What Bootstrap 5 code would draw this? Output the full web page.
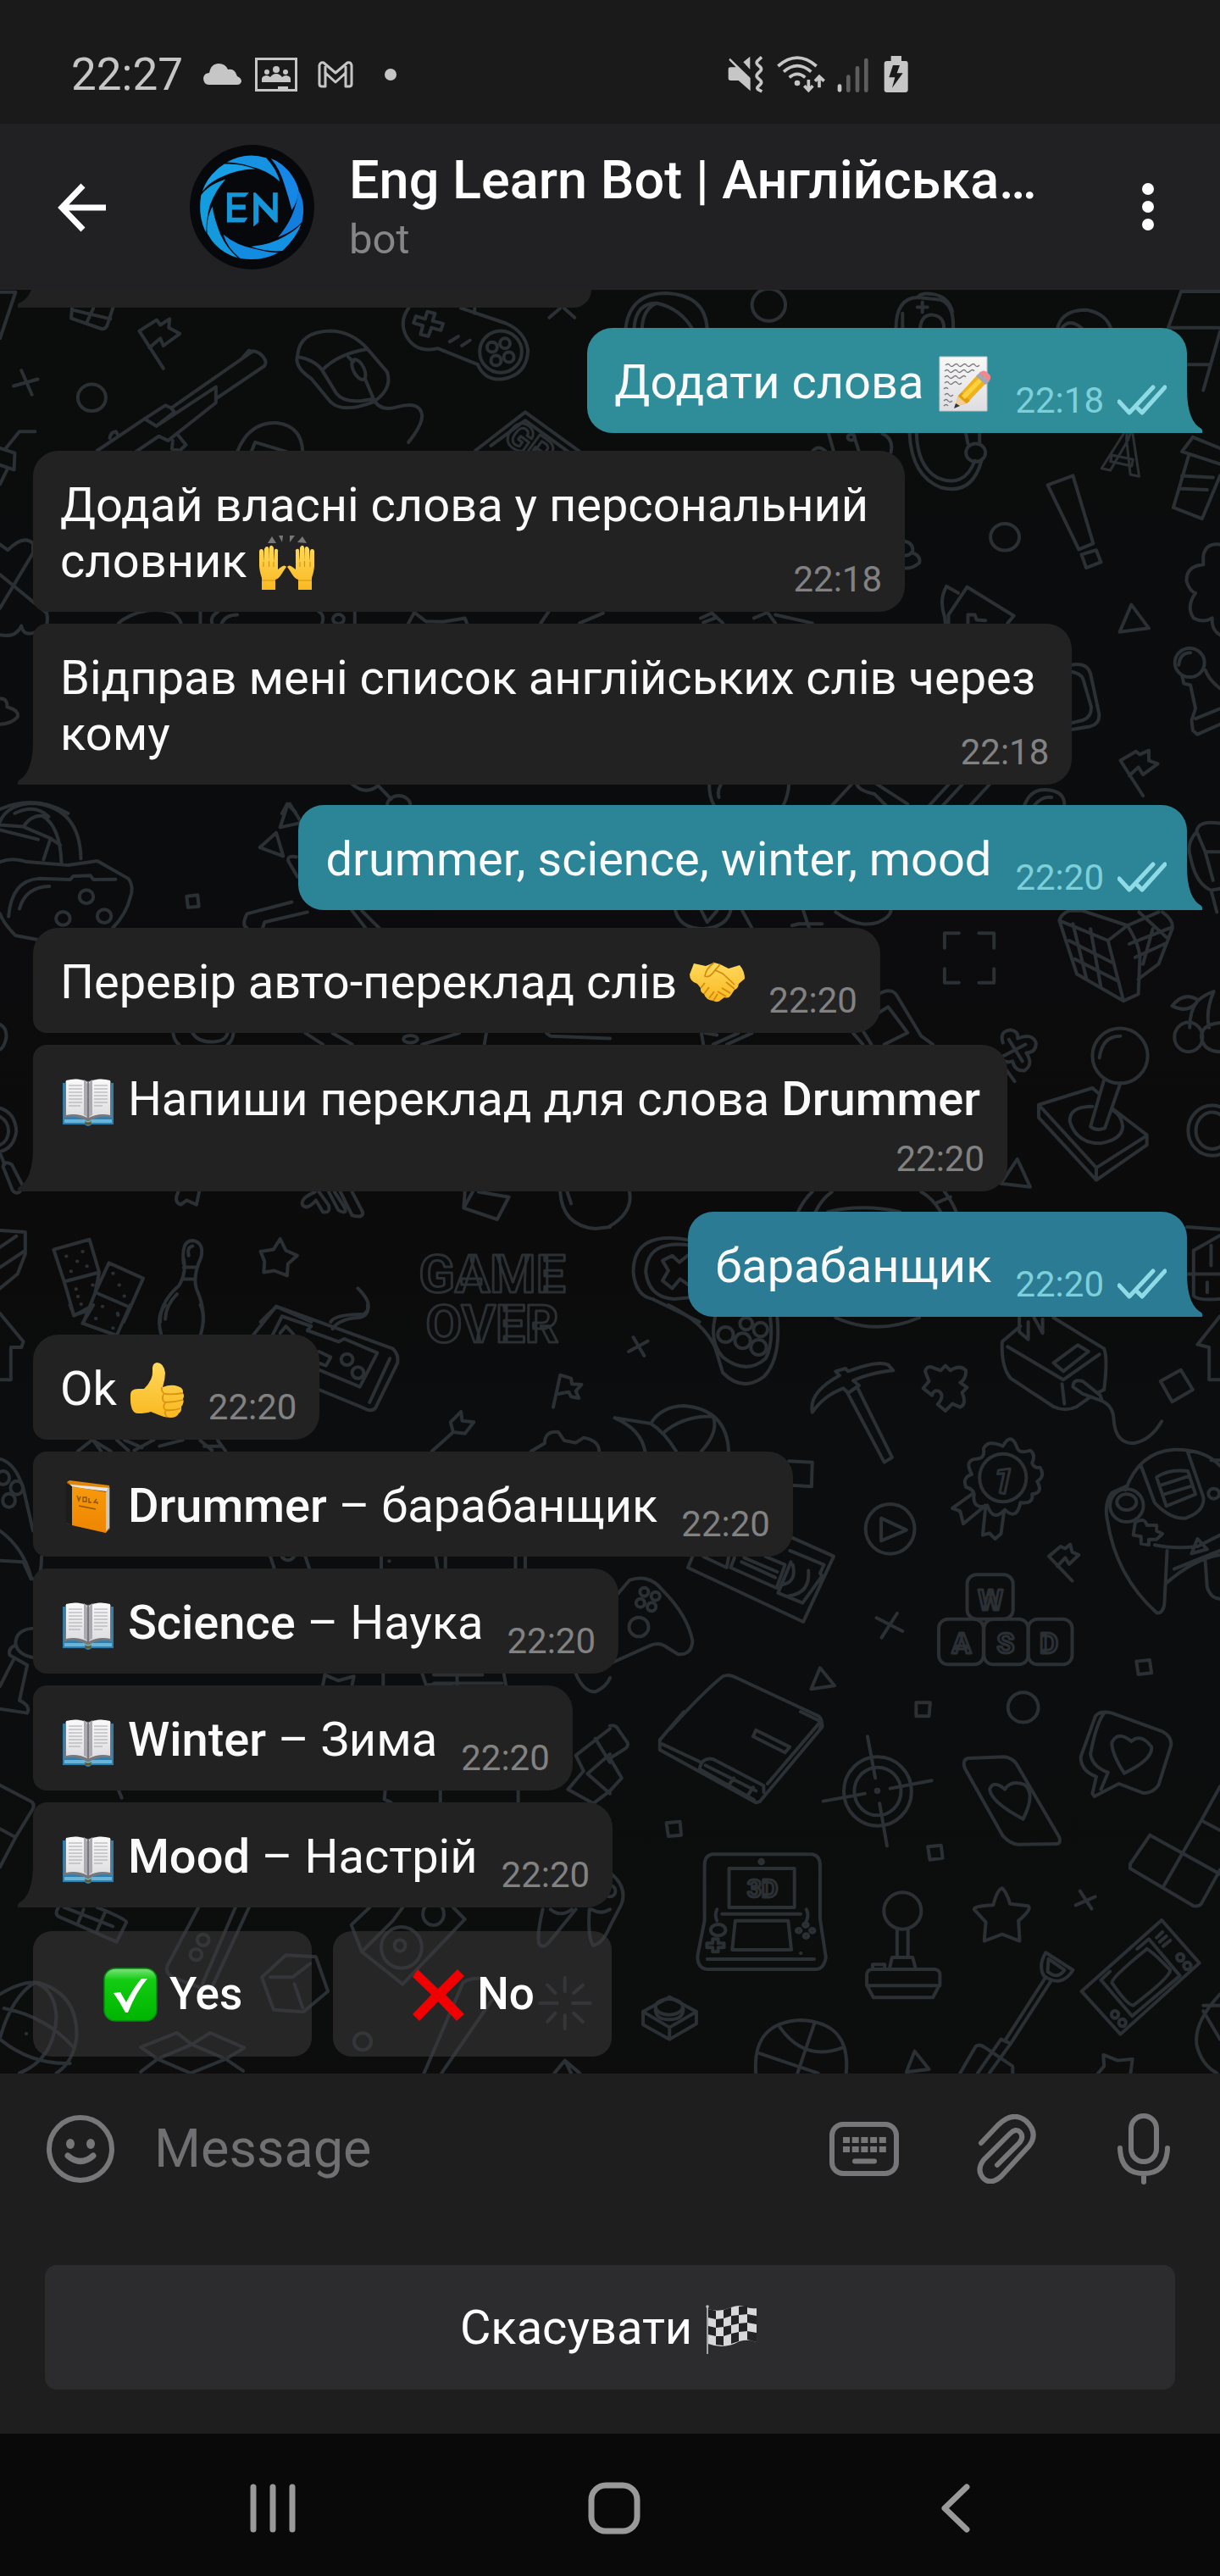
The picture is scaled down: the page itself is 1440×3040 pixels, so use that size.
<!DOCTYPE html>
<html lang="uk">
<head>
<meta charset="utf-8">
<meta name="viewport" content="width=device-width, initial-scale=1">
<title>Eng Learn Bot</title>
<link rel="stylesheet" href="https://cdn.jsdelivr.net/npm/bootstrap@5.3.0/dist/css/bootstrap.min.css">
<style>
body{background:#1e1e1e;color:#fafafa;font-family:Roboto,"Noto Sans",sans-serif}
svg{display:block;flex-shrink:0}
.statusbar{background:#1a1a1a;color:#c6c6c6;height:146px;padding:30px 0 0 84px;font-size:53px;line-height:60px}
.statusright{margin-right:367px}
.chathead{background:#212123;height:196px;padding:0 62px 0 62px}
.iconbtn{background:none;border:0;padding:0;color:inherit}
.chathead h1{font-size:63px;line-height:74px;font-weight:500;color:#fff}
.chathead .sub{font-size:49px;line-height:58px;color:#868688}
.avatar{margin:0 41px 0 91px}
.chat{background:linear-gradient(#0b0d0c,#0b0c0e 30%,#0b0b0b 55%,#0b0d0e 62%,#0b0d0e 80%,#0d0d0d);padding:0 39px 20px;overflow:hidden}
.wallpaper{position:absolute;inset:0;width:100%;height:100%}
.wallpaper g,.wallpaper .outl{fill:none;stroke:#2b3035;stroke-width:4;stroke-linecap:round;stroke-linejoin:round}
.wallpaper path,.wallpaper ellipse,.wallpaper rect{vector-effect:non-scaling-stroke}
.wallpaper .outl{font-family:Roboto,sans-serif;font-weight:700;stroke-width:3;text-anchor:middle}
.msg{position:relative;display:flex;align-items:flex-end;gap:28px;background:#222;padding:31px 27px 27px 32px;margin-top:14px;border-radius:16px 30px 30px 16px;font-size:56px;line-height:66px;white-space:nowrap}
.msg b{font-weight:500}
.msg.first{border-top-left-radius:30px;margin-top:21px}
.msg.tail{border-bottom-left-radius:0}
.msg.tail::after,.msg.sent::after{content:"";position:absolute;bottom:0;left:-19px;width:21px;height:52px;background:inherit;clip-path:path("M21 0V52H1Q0 49 2 47Q19 38 19 0Z")}
.msg.sent{background:#2f8d9a;border-radius:30px 30px 0 30px;margin:24px 0 0;padding-right:24px}
.msg.sent::after{left:auto;right:-19px;transform:scaleX(-1)}
.msg.sent.mid{background:#2c8597}
.msg.sent.low{background:#2a7b93}
.msg.multi{padding-right:43px}
.msg.loose{padding:31px 32px 76px}
.stamp{display:flex;align-items:center;gap:16px;font-size:42px;line-height:48px;color:#828282;margin-bottom:-13px}
.sent .stamp{color:#7dd0da}
.multi .stamp,.loose .stamp{position:absolute;right:27px;bottom:14px;margin:0}
.stub{margin:0 0 0;width:659px;height:21px;padding:0}
.stub.msg.tail{border-top-left-radius:0;border-top-right-radius:0}
.stub.msg.tail::after{height:21px;clip-path:path("M21 0V21H1Q0 18 2 16Q12 12 17 0Z")}
.emo{display:inline-block;width:66px;height:66px;margin:-4px 0;vertical-align:-12px}
.quick{margin-top:28px;gap:25px}
.quick button{flex:0 0 329px;height:148px;border:0;border-radius:22px;background:rgba(60,60,60,.55);color:#fff;font-weight:500;font-size:53px;line-height:62px;padding:0}
.compose{height:177px;padding:0 58px 0 54px;color:#77777a}
.compose input{background:none;border:0;outline:0;font-size:63px;line-height:74px;color:#fff;min-width:0;margin-left:46px;padding:0}
.compose input::placeholder{color:#707072;opacity:1}
.compose .attach{margin-left:92px}
.compose .voice{margin-left:95px}
.kbd{padding:49px 53px 52px}
.kbd button{height:147px;border:0;border-radius:14px;background:#2c2c2e;color:#fff;font-size:56px;line-height:66px;padding:0}
.softnav{background:#090909;color:#999;height:168px;padding:8px 110px 0 120px}
.softnav button{flex:1}
</style>
</head>
<body>
<svg width="0" height="0" class="position-absolute" aria-hidden="true">
<defs>
<linearGradient id="skin" x1="0" y1="0" x2="0" y2="1"><stop offset="0" stop-color="#ffd95c"/><stop offset="1" stop-color="#f9b820"/></linearGradient>
<linearGradient id="paper" x1="0" y1="0" x2="0" y2="1"><stop offset="0" stop-color="#f8f8f8"/><stop offset="1" stop-color="#dedee2"/></linearGradient>
<linearGradient id="greenbox" x1="0" y1="0" x2="0" y2="1"><stop offset="0" stop-color="#7ee27e"/><stop offset=".22" stop-color="#12cc12"/><stop offset="1" stop-color="#00b400"/></linearGradient>
<linearGradient id="cover" x1="0" y1="0" x2="0" y2="1"><stop offset="0" stop-color="#f79a0c"/><stop offset="1" stop-color="#ee8500"/></linearGradient>
<symbol id="book" viewBox="0 0 66 66">
<path d="M3 12h60v49H37q-4 4-8 0H3z" fill="#2f7fae"/><path d="M5 55h56v4H5z" fill="#6ab4d8"/>
<path d="M6 10Q20 5 33 10Q46 5 60 10L61 53Q46 50 34 57H32Q20 50 5 53Z" fill="#77777c"/>
<path d="M7 9Q21 5 32 11V53Q20 47 7 50Z" fill="url(#paper)"/><path d="M59 9Q45 5 34 11V53Q46 47 59 50Z" fill="url(#paper)"/>
<path d="M28 8q3 2 4 5v40q-2-3-4-3zM38 8q-3 2-4 5v40q2-3 4-3z" fill="#aaaab0"/>
<path d="M10 15h16M10 19h16M10 23h16M10 27h16M10 31h16M10 35h16M10 39h14M40 15h16M40 19h16M40 23h16M40 27h16M40 31h16M40 35h16M40 39h10" stroke="#a8a8ad" stroke-width="1.2" fill="none"/>
<path d="M29 57q4 3 8 0l-1 4h-6z" fill="#5c5a2a"/>
</symbol>
<symbol id="orange" viewBox="0 0 66 66">
<path d="M8 3L59 9V58L54 63L8 52Z" fill="#8a5300"/><path d="M10 3L58 8L55 14L14 9Z" fill="#e6e6e6"/><path d="M54 15L58 9V57L54 62Z" fill="#c9c6c0"/>
<path d="M8 3L11 1L58 7V10L13 6Z" fill="#e0860a"/>
<path d="M7 4L14 8V54L7 51Z" fill="#1c1c1a"/><path d="M14 8L54 15V63L14 54Z" fill="url(#cover)"/>
<path d="M20 19l2 6 2-5M27 21h4v5h-4zM34 22v5h3M43 23l-3 4h4v2M22 31l20 4" stroke="#8d5600" stroke-width="1.4" fill="none"/>
</symbol>
<symbol id="note" viewBox="0 0 66 66">
<path d="M5 1H61V65H5Z" fill="url(#paper)" stroke="#c5c5c8"/>
<path d="M12 11q3-3 5 0t5 0 5 0 5 0 5 0 5 0 5 0 5 0M11 18q3-3 5 0t5 0 5 0 5 0 5 0 5 0 5 0M11 25q3-3 5 0t5 0 5 0 5 0 5 0M11 32q3-3 5 0t5 0 5 0 5 0M10 39q3-3 5 0M11 46q3-3 5 0t5 0M10 53q3-3 5 0t5 0M10 59q3-3 5 0" fill="none" stroke="#77777c" stroke-width="1.300"/>
<path d="M23 60L27 47L50 22L60 32L37 56Z" fill="#efb21e"/><path d="M27 47L31 43L41 53L37 56Z" fill="#e09c10"/><path d="M31 47L53 25L57 28L35 51Z" fill="#ffd23d"/>
<path d="M23 60L27 48L36 56Z" fill="#efcd9c"/><path d="M22 62L24 56L29 59Z" fill="#333"/>
<path d="M48 24L53 19L64 30L59 34Z" fill="#a4a7ad"/><path d="M52 20Q57 15 62 20Q68 25 63 30Z" fill="#ee8892"/>
</symbol>
<symbol id="hands" viewBox="0 0 66 66">
<path d="M11 10l5-8 5 8zM24 1l5 0-1 8zM37 9l0-8 6 0zM46 9l6-7 5 8z" fill="#777"/>
<g id="hand1"><path d="M4 65V51Q1 42 1 36V20Q1 17 3.500 17T6 20V32L7 17Q8 14 10 14T12.500 17V31L13 15Q14 12 16 13T18 16V32L19 18Q20 16 22 17T23 20V41L27 38Q31 35 33 38Q30 42 27 47Q24 52 20 53V65Z" fill="url(#skin)"/><path d="M6 32v6M12.500 31v7M18 32v6M4 54h16" stroke="#dc9410" stroke-width="1.200" fill="none"/></g>
<use href="#hand1" transform="matrix(-1 0 0 1 67 0)"/>
</symbol>
<symbol id="shake" viewBox="0 0 66 66">
<path d="M6 9L20 12L30 8L37 10L47 15L60 11Q66 18 66 27L59 33Q58 39 54 40L50 46Q47 51 42 49L38 52Q34 56 29 53Q20 52 18 45Q13 43 14 38L10 33Q1 30 1 22Z" fill="url(#skin)"/>
<path d="M30 8Q20 15 19 24Q24 27 31 17Q36 19 40 21L54 34M37 10L31 17M39 38l10 6M34 42l10 6M44 31l10 8M14 38l5-6M18 45l6-8M24 50l6-8M29 53l5-8" fill="none" stroke="#d08a10" stroke-width="1.700"/>
</symbol>
<symbol id="thumb" viewBox="0 0 66 66">
<path d="M2 38Q2 31 11 31L18 31Q29 20 28 10Q27 1 33 0Q41 0 43 12Q43 20 40 29Q50 25 58 28Q65 30 64 36Q66 39 64 43Q66 47 62 52Q63 57 59 60Q57 65 49 65Q42 65 36 62L26 58Q20 60 11 60Q1 60 2 38Z" fill="url(#skin)"/>
<path d="M39 29Q38 35 43 37Q53 38 64 36M41 37Q38 45 43 47Q54 47 64 44M43 47Q39 54 44 56Q53 57 61 54M44 56Q41 60 45 64" fill="none" stroke="#db940f" stroke-width="1.800"/>
</symbol>
<symbol id="yes" viewBox="0 0 66 66"><rect x="2" y="2" width="62" height="62" rx="13" fill="url(#greenbox)" stroke="#078a12" stroke-width="1.500"/><path d="M13 31L21 30L28 42Q37 24 46 14L53 14Q40 29 30 54H27Q21 42 13 31Z" fill="#fff"/></symbol>
<symbol id="no" viewBox="0 0 66 66"><path d="M9 3L33 26L56 3L64 11L42 33L64 56L55 64L33 41L11 64L3 56L25 33L3 12Z" fill="#f00000"/></symbol>
<symbol id="flag" viewBox="0 0 66 66">
<path d="M4 6V62" stroke="#a9b5b5" stroke-width="1.800"/><circle cx="4" cy="6" r="1.800" fill="#bbb"/>
<path d="M5 9Q17 13 29 8T48 6T62 8V48Q52 44 42 47Q24 57 5 50Z" fill="#d8d8d8"/>
<path d="M5 9l9 2v10l-9-2zM23 10l9-3v10l-9 3zM41 6l10-1v10l-10 1zM14 21l9-1v10l-9 1zM32 17l9-1v10l-9 2zM51 15l11 2v10l-11-2zM5 29l9 2v10l-9-2zM23 30l9-2v10l-9 3zM41 26l10-1v10l-10 1zM14 41l9 0v11l-9-1zM32 38l9-2v11l-9 3zM51 35l11 2v11l-11-3z" fill="#232325"/>
</symbol>
<symbol id="ticks" viewBox="0 0 58 38"><path d="M2 20L14 33L42 3M24 28L29 33L56 3" fill="none" stroke="#8edbe6" stroke-width="5" stroke-linecap="round" stroke-linejoin="round"/></symbol>
</defs>
</svg>

<div class="d-flex flex-column min-vh-100">
<div class="statusbar d-flex align-items-center">
  <span>22:27</span>
  <svg class="ms-4" width="45" height="26" viewBox="0 0 45 26" fill="currentColor"><path d="M6 25Q0 24 0 17Q1 11 7 11Q9 0 18 0Q26 0 29 7Q37 5 40 15Q45 17 45 21Q44 25 40 25Z"/></svg>
  <svg class="ms-3" width="50" height="40" viewBox="0 0 50 40" fill="currentColor"><rect x="1.500" y="1.500" width="47" height="37" fill="none" stroke="currentColor" stroke-width="3"/><circle cx="14" cy="17" r="3"/><circle cx="25" cy="14" r="4"/><circle cx="36" cy="17" r="3"/><path d="M8 29v-4q0-3 5-4 3 0 5 2 3-4 7-4t7 4q2-2 5-2 5 1 5 4v4zM27 34h12v4H27z"/></svg>
  <svg class="ms-4" width="42" height="32" viewBox="0 0 42 32" fill="none" stroke="currentColor" stroke-width="3" stroke-linejoin="round"><path d="M2 27V5Q3 1 7 2L21 14L35 2Q39 1 40 5V27Q40 30 37 30H33V14L21 25L9 14V30H5Q2 30 2 27Z"/><path d="M9 14V6M33 14V6"/></svg>
  <svg width="92" height="20" viewBox="0 0 92 20"><circle cx="44" cy="10" r="7" fill="currentColor"/></svg>
  <svg class="statusright ms-auto" width="214" height="44" viewBox="58 48 642 132" fill="none" stroke="currentColor" stroke-width="11">
    <path d="M66 56L138 126V172L96 135H68Q60 135 60 127V95Q60 88 68 88H87L62 62Z" fill="currentColor" stroke="none"/><path d="M113 70L137 50V96Z" fill="currentColor" stroke="none"/>
    <path d="M178 52L163 66Q158 72 163 78L174 88Q179 94 174 101L163 112Q158 118 163 125L174 135Q180 142 173 149L164 158Q160 163 166 167L179 174"/>
    <path d="M236 84Q304 25 372 84M256 104Q304 62 353 104M276 124Q304 100 332 124"/><circle cx="304" cy="144" r="10" fill="currentColor" stroke="none"/>
    <path d="M344 132V168M329 154L344 170L359 154M382 160V123M367 137L382 121L399 137"/>
    <path d="M454 155V169" stroke-width="14" stroke-linecap="round"/><path d="M485 122V170M517 91V170M548 63V170" stroke="#5e5e5e" stroke-width="14" stroke-linecap="round"/>
    <path d="M636 48H673V66H688Q696 66 696 76V168Q696 177 686 177H622Q612 177 612 168V76Q612 66 622 66H636ZM643 81L629 124H650L640 161L678 109H657L667 81Z" fill="currentColor" fill-rule="evenodd" stroke="none"/>
  </svg>
</div>

<header class="chathead d-flex align-items-center">
  <button class="iconbtn" aria-label="Back"><svg width="71" height="60" viewBox="0 0 71 60" fill="none" stroke="#fff" stroke-width="7"><path d="M63 31H12M36 5L11 31L36 57"/></svg></button>
  <svg class="avatar" width="147" height="147" viewBox="42 44 442 442"><circle cx="263" cy="265" r="221" fill="#07080c"/>
    <path d="M173 106Q240 68 313 90Q350 130 362 174Q315 133 259 121Q220 108 173 106Z" fill="#1692e2"/>
    <path d="M330 92Q400 120 428 200Q428 240 404 275Q393 230 378 185Q362 130 330 92Z" fill="#1687e6"/>
    <path d="M427 204Q455 250 440 318Q410 350 355 372Q395 325 412 275Q425 240 427 204Z" fill="#127fe0"/>
    <path d="M438 324Q420 375 371 420Q320 426 259 405Q330 398 380 368Q418 348 438 324Z" fill="#1392e3"/>
    <path d="M355 427Q290 460 220 446Q175 410 161 362Q210 402 270 412Q312 424 355 427Z" fill="#128be0"/>
    <path d="M212 445Q140 425 104 358Q98 310 122 263Q130 310 150 360Q172 410 212 445Z" fill="#1399dc"/>
    <path d="M100 355Q70 300 82 222Q110 185 169 166Q130 210 113 260Q100 310 100 355Z" fill="#129ddf"/>
    <path d="M86 210Q105 150 165 112Q220 108 275 130Q210 130 150 160Q108 180 86 210Z" fill="#17a0e6"/>
    <path d="M174 213H252L238 229H192V256H240V274H192V302H248L236 319H174ZM268 334V213H275L337 277V213H354V319H344L286 255V318Z" fill="#1596d9"/>
  </svg>
  <div class="flex-grow-1 overflow-hidden">
    <h1 class="mb-1 text-nowrap">Eng Learn Bot | Англійська…</h1>
    <div class="sub">bot</div>
  </div>
  <button class="iconbtn" aria-label="Menu"><svg width="45" height="56" viewBox="0 0 45 56" fill="#fff"><circle cx="22" cy="7" r="7"/><circle cx="22" cy="28" r="7"/><circle cx="22" cy="49" r="7"/></svg></button>
</header>

<main class="chat position-relative d-flex flex-column flex-grow-1 justify-content-end align-items-start">
<svg class="wallpaper" viewBox="0 342 1440 2105" preserveAspectRatio="xMidYMin slice" aria-hidden="true">
<g transform="translate(0 340) scale(.4592 .3954)">
<path d="M0 12H40L0 150M185 60L183 90L262 122Q272 122 276 110L290 60M240 60L222 105M190 66L284 92M420 240L358 128L403 95L412 110L436 92L434 118L462 136L420 172L412 150L384 178"/>
<path d="M250 485L372 390L425 350L440 358L650 188Q670 190 682 215Q684 225 680 232L555 330M372 390L402 412L448 370L440 358M402 412L555 295V342L432 455L408 442L350 488M455 435L478 468L462 485L442 480L444 455M622 210L640 186L648 190M282 448Q284 430 298 428L304 440"/>
<path d="M35 292L97 272M55 246L82 318M90 428H50L15 478M0 478L38 492L36 542L0 528M20 538L0 585M610 488Q640 400 710 402Q775 410 778 488M646 488L656 460L735 488"/>
<ellipse cx="236" cy="327" rx="36" ry="40"/>
<path d="M765 200Q770 130 850 128Q905 130 945 182L995 250Q1010 300 960 340Q880 375 850 340L800 270Q755 235 765 200M765 205Q810 215 828 245Q870 195 945 182M828 245L865 315Q890 350 960 330M895 205L908 220M938 270L960 330Q975 370 1020 355Q1080 335 1085 380Q1085 410 1050 460"/><ellipse cx="922" cy="243" rx="14" ry="32" transform="rotate(-22 922 243)"/>
<path d="M1050 60Q1025 100 1045 145Q1070 195 1125 180L1228 228Q1245 275 1290 272Q1355 260 1357 185Q1350 130 1300 105L1185 60M1098 70l20 6-6 22 27 8-6 20-24-8-8 26-20-6 6-26-24-8 6-20 24 8zM1156 160L1178 144M1187 172L1208 156M1220 60v15"/>
<ellipse cx="1287" cy="190" rx="54" ry="62"/><ellipse cx="1265" cy="176" rx="13" ry="15"/><ellipse cx="1298" cy="165" rx="13" ry="15"/><ellipse cx="1308" cy="206" rx="13" ry="15"/><ellipse cx="1275" cy="216" rx="13" ry="15"/>
<path d="M1222 485L1350 370L1490 488M1262 470L1350 395L1460 488M1412 88L1440 60M1450 60L1477 88M0 765L20 782Q60 735 85 762V790L0 955M0 855L120 970Q130 1020 90 1028Q60 1040 55 1008Q40 1045 0 1035M0 1225Q20 1225 18 1250Q50 1260 45 1280Q30 1300 0 1302"/>
<path d="M305 1000L315 990Q380 945 440 968Q460 980 465 1000M515 966V1000M545 1000Q540 980 560 966M570 1000Q580 975 610 975M820 966Q835 975 828 1000M912 966V1000M1050 1000L1065 968L1095 995L1140 996L1195 985L1200 1000M1390 1000L1410 966M1490 1000L1550 970M905 1480Q940 1515 972 1485L1005 1525M725 1568L738 1540L760 1565M0 1555Q90 1510 175 1568"/>
<ellipse cx="870" cy="988" rx="14" ry="14"/><ellipse cx="1025" cy="1545" rx="30" ry="30"/>
</g>
<g transform="translate(720 340) scale(.4592 .3954)">
<path d="M40 122Q50 15 145 15Q245 20 250 122M62 122Q65 45 120 45Q180 60 212 122M82 122Q85 60 120 45M735 122Q735 30 790 28L850 35Q885 50 882 122M790 28Q800 12 830 18Q870 25 880 70M797 122Q800 78 830 80Q860 85 858 122M803 42v30M790 57h26M752 122V75M1150 122Q1160 65 1225 65Q1275 75 1288 122M1160 122Q1180 85 1215 122M1468 10H1568M1468 10L1435 118H1568M1568 130L1525 305M1483 228H1540"/>
<ellipse cx="408" cy="50" rx="43" ry="48"/>
<path d="M520 488Q535 465 555 488M562 434L575 488M625 434L640 488M700 434Q730 450 722 490M770 434Q775 560 850 595Q930 620 955 515M788 434Q790 530 840 565Q910 600 938 515M915 434L920 465M950 434V465"/><ellipse cx="940" cy="491" rx="25" ry="27"/><ellipse cx="620" cy="445" rx="9" ry="9"/>
<path d="M1498 445L1568 478M1498 445L1470 488L1568 525M1488 498L1448 655L1522 688L1568 560M1470 560L1550 565M1462 598L1535 602M1125 588L1190 560L1242 762L1205 780ZM1212 795L1250 782L1262 818L1224 835Z"/><ellipse cx="1015" cy="743" rx="37" ry="40"/>
<path d="M1568 765Q1530 760 1525 800V825Q1480 830 1482 875Q1490 905 1505 910Q1480 950 1500 985Q1525 1000 1548 985Q1545 1020 1568 1035M755 755Q780 760 778 785Q770 800 755 798M778 790Q800 800 795 820Q775 840 752 835M862 1000L860 980Q845 930 865 890L895 910M870 1000V975L918 892L1038 978L1022 1000M920 1000V975H938L942 990L965 992M233 985L262 970L290 1000M240 998L270 985M370 985L405 968L425 1000M425 975L520 1000M1340 945L1385 1015L1310 1026Z"/>
<ellipse cx="1490" cy="1118" rx="38" ry="43"/><path d="M1462 1125Q1465 1088 1492 1088M1470 1155L1475 1180L1492 1185L1505 1255L1495 1290L1498 1320L1510 1332L1568 1302M1530 1140Q1540 1170 1568 1195M1505 1285L1568 1255M1185 1125Q1225 1115 1235 1150L1257 1270Q1260 1300 1235 1308L1185 1318M1185 1145Q1215 1150 1218 1175L1237 1250Q1238 1280 1215 1290L1185 1298M1370 1515L1312 1410L1352 1383L1362 1392L1385 1380V1410L1408 1420L1370 1452L1358 1430L1335 1455"/>
<path d="M255 1480Q255 1520 268 1545M285 1482Q275 1500 280 1520M460 1480Q458 1515 445 1545M570 1545L620 1482M635 1482Q640 1500 680 1510L710 1545M685 1480L765 1540M820 1545L870 1482M855 1545L905 1482M925 1545L975 1482M1065 1545Q1080 1495 1120 1497Q1170 1500 1168 1545M1090 1545Q1110 1515 1135 1520"/>
</g>
<g transform="translate(0 940) scale(.4592 .3954)">
<path d="M0 75Q20 20 90 20Q205 35 208 185M60 90Q80 55 110 58Q155 90 158 200M0 85L60 90L130 125L112 188M130 125L155 145M38 50Q90 20 125 60M0 195Q30 180 70 195L175 205L250 192L330 245Q345 270 335 300Q325 350 290 392M0 350Q10 380 40 415L100 428M22 358Q30 250 100 245L180 248L188 238L232 236L240 248L297 247M50 335Q65 270 127 268M0 100L98 128"/>
<ellipse cx="222" cy="299" rx="18" ry="20"/><ellipse cx="162" cy="364" rx="18" ry="20"/><ellipse cx="268" cy="357" rx="18" ry="20"/>
<path d="M740 22L720 92L775 78L745 22M710 108L668 152L728 178ZM765 240L742 195Q735 175 762 180M480 298L508 294L511 328L483 331ZM635 393Q620 385 635 350L750 315M675 393L680 375L790 345M905 341L940 393M930 341L975 393M0 680Q18 690 16 720Q10 750 0 755M445 706Q448 730 460 740M600 706Q598 730 585 740M495 706Q510 735 550 732Q580 730 585 706M785 706L830 740M855 706L905 740M1085 740L1180 706M1250 706L1245 740M1405 706L1415 715L1568 722"/><ellipse cx="1055" cy="724" rx="18" ry="11"/>
<path d="M0 930Q40 945 42 1000Q35 1050 0 1060M0 955Q22 970 22 1000Q20 1030 0 1040M0 1065L12 1098M8 1105L32 1175Q45 1195 60 1165L30 1098Q10 1085 8 1105M458 1180Q445 1210 465 1218L480 1205L505 1218L512 1180M810 1180Q770 1200 778 1220Q790 1235 812 1205L830 1240Q850 1245 845 1220L820 1180M845 1180L870 1235Q895 1250 885 1225L860 1180M875 1180L905 1250Q935 1260 932 1240L905 1180M1195 1180L1192 1228L1278 1262L1308 1195M1230 1180L1305 1195M1215 1180L1192 1228M1440 1180Q1445 1280 1530 1290L1568 1285M1458 1180L1468 1215"/>
<path d="M138 1352L230 1322L255 1420L165 1448ZM165 1448L190 1548L225 1535M255 1420L245 1478M280 1392L368 1438L335 1525L245 1480ZM245 1480L215 1568M335 1525L318 1568M170 1372h1M212 1358h1M198 1387h1M182 1417h1M223 1402h1M195 1470h1M238 1458h1M200 1492h1M208 1515h1M290 1423h1M306 1458h1M319 1491h1M263 1522h1M303 1548h1"/>
<path d="M472 1395Q465 1325 495 1325Q525 1330 517 1375Q495 1430 505 1470Q525 1520 522 1568M472 1380Q480 1420 460 1460Q410 1510 412 1568M472 1405h32M468 1440h32M485 1370Q480 1345 495 1342M425 1560Q425 1520 455 1485M720 1320L735 1355L764 1370L740 1395L738 1430L705 1415L678 1420L680 1388L670 1358L703 1352ZM0 1295L65 1300V1365L45 1425L0 1468M0 1345L42 1312M0 1405L65 1355M920 1468Q965 1520 935 1545Q860 1545 850 1568M670 1568L710 1522L800 1568"/>
</g>
<g transform="translate(720 940) scale(.4592 .3954)">
<path d="M168 341Q180 395 240 395Q300 390 310 341M235 341L250 375L275 341M340 341L365 393M497 341L512 393M468 385L485 380H545M580 345Q640 395 690 375Q720 360 722 341M860 452V408H897M948 408H987V452M860 514V556H897M948 556H987V514"/>
<path d="M1155 370Q1160 350 1180 341L1215 341L1330 385Q1360 440 1362 480L1358 590L1320 610L1200 530ZM1155 370L1280 430L1330 385M1280 430L1320 610M1235 395L1262 570M1190 380L1225 545M1180 430L1290 495M1195 485L1305 550M1420 345Q1450 370 1445 395L1410 500L1358 545M1335 440L1445 390M1330 385L1410 345M1360 345L1430 420M1395 395L1370 500M1350 480L1425 440M1568 80Q1510 70 1508 105Q1480 140 1492 180Q1505 260 1545 280L1568 275M1545 280L1560 345M1530 165H1568M1510 110L1530 165L1550 250"/>
<ellipse cx="1487" cy="718" rx="36" ry="44"/><path d="M1568 675Q1520 680 1520 718Q1525 760 1568 762M1490 690Q1490 640 1510 610Q1530 590 1552 582Q1530 640 1540 690M1445 625Q1475 580 1512 608Q1490 650 1445 625M670 670L660 640L690 590Q720 570 735 590L800 715L830 740M625 706L650 740M670 660L715 628L765 705L705 740M645 690L672 740M235 706L240 740M245 706L275 712M265 740L330 706M300 740L365 706"/>
<path d="M1010 735Q1000 700 1030 697Q1050 700 1048 722Q1085 705 1095 735Q1095 765 1070 765Q1090 800 1065 818Q1040 820 1035 790Q1010 800 1000 770M1025 725L1060 790M1068 740L1010 775M1018 815L1040 850"/>
<ellipse cx="1311" cy="774" rx="71" ry="82"/><path d="M1258 780Q1265 715 1312 715M1270 845L1235 985Q1250 1000 1272 990L1312 855M1240 870L1102 920V958L1250 1145L1380 1040V1010L1290 930M1102 920L1250 1108L1380 1012M1250 1108V1145M1240 870L1255 885M1240 925Q1180 925 1182 970Q1200 1035 1260 1035Q1315 1025 1318 985Q1315 950 1290 935M1047 1082L1080 1165L1005 1155Z"/>
<ellipse cx="1548" cy="997" rx="62" ry="75"/><ellipse cx="1548" cy="997" rx="42" ry="55"/>
<path d="M483 1240Q500 1200 520 1180M528 1240Q545 1200 570 1180M800 1180Q830 1200 850 1240M860 1180Q880 1210 890 1240M835 1215L875 1195M560 1240Q650 1215 745 1240M50 1180Q60 1240 0 1282M209 1325Q60 1290 60 1420Q65 1490 110 1500L230 1568M209 1340Q95 1320 92 1420Q100 1495 165 1500L209 1495M135 1385L160 1370L178 1390L200 1370M135 1385L150 1415L135 1445L160 1468L180 1440L205 1460M1483 1285L1568 1292M1500 1355L1568 1310M1500 1355V1490Q1510 1505 1568 1500M1483 1425H1568M1545 1340V1400M1535 1450V1480"/>
</g>
<g transform="translate(0 1540) scale(.4592 .3333)">
<path d="M0 30L60 130L55 150H28V265H0M180 0L190 38L228 10M240 0L212 65L300 108L335 0M415 108Q400 40 425 0M515 108Q530 40 515 0M246 48h1M290 82h1M302 30h1"/>
<path d="M650 108L710 5L1010 155Q1025 175 1022 205L965 365Q955 380 935 365L820 300M700 108L725 40L800 75L790 90L870 130L885 120L970 170L925 290L820 230M820 165L850 185L838 215L818 205M720 100L735 75L755 105M855 85Q870 50 920 45Q950 40 945 0M1002 190L950 345"/><ellipse cx="892" cy="193" rx="15" ry="20"/><ellipse cx="920" cy="240" rx="15" ry="20"/>
<path d="M1422 362L1440 248L1468 260L1470 280L1495 282L1480 305L1488 330L1468 325L1462 308L1435 315M1110 518L1165 450L1158 415L1185 378L1188 410L1218 415L1195 455L1165 450M1365 518L1400 490Q1400 445 1435 450L1450 480L1480 488L1500 470Q1540 480 1540 518"/>
<path d="M0 545Q40 560 60 650L85 800M0 800Q60 860 80 965Q105 1000 107 891M0 905L60 910L80 970"/><ellipse cx="8" cy="612" rx="16" ry="24"/><ellipse cx="43" cy="647" rx="16" ry="24"/><ellipse cx="23" cy="692" rx="16" ry="24"/>
<path d="M200 518L235 480M260 518L240 480L285 518M300 478L330 515M320 478L365 505M345 515L395 478M410 500L470 478M515 480L545 515M560 480L580 518M525 500H570M695 891L705 933M785 891L795 933M725 893Q740 915 755 893M980 891V933M1120 891L1125 933M1145 891V933M1325 891V933M1350 891V933M1000 907h1"/>
<path d="M85 1145Q40 1150 40 1200Q45 1240 90 1250M40 1205Q20 1215 25 1240L70 1275L50 1400Q80 1420 70 1445L0 1430M35 1255L0 1350M830 1345L835 1310L870 1330L910 1315L905 1345M985 1305V1345M1085 1305L1095 1345H1160M1115 1310H1240M1115 1340H1290M1175 1305V1345M1295 1305L1300 1345M1480 1305Q1500 1370 1530 1370Q1560 1350 1568 1320"/>
</g>
<g transform="translate(720 1540) scale(.4592 .3333)">
<path d="M150 0Q240 60 270 150L290 240Q340 310 395 255Q440 190 430 45M270 45Q255 130 290 185Q350 250 400 190Q420 140 412 45M580 45Q685 110 795 45M48 165L97 128M60 115L88 180"/>
<ellipse cx="297" cy="105" rx="20" ry="27"/><ellipse cx="341" cy="127" rx="20" ry="27"/><ellipse cx="387" cy="87" rx="18" ry="25"/><ellipse cx="382" cy="150" rx="20" ry="27"/><ellipse cx="350" cy="66" rx="16" ry="22"/>
<path d="M520 380Q510 310 590 250L580 235L605 225L612 235Q690 195 715 212L728 232Q670 240 625 268L640 285L612 312L600 295Q550 320 520 380M608 305L705 557L725 540L635 290M810 235Q815 210 835 225L850 232L862 215L875 232Q900 210 915 232Q915 265 900 275L918 292L905 310Q918 350 900 362L880 350L862 375L842 352Q862 320 845 305Q830 300 828 320L805 295L820 270Z"/>
<path d="M1055 75L1008 130Q1005 220 1030 260L1140 360Q1170 380 1200 360L1235 325M1140 45L1270 155Q1280 190 1270 300L1255 310M1022 148L1165 265L1258 175M1202 142L1140 205L1165 235L1230 165ZM1162 280L1168 350M1052 45V95L1075 122V60M1090 45L1112 100V50M1190 290Q1190 260 1215 270L1260 320L1265 340L1215 315ZM1265 340Q1295 360 1295 410Q1300 490 1345 490Q1390 480 1418 412M1467 230L1498 300L1445 343L1415 270ZM1568 40L1510 140L1540 150V265H1568"/>
<path d="M12 400L105 420Q130 360 190 357Q300 370 305 518M12 400Q80 440 90 518M105 420Q140 450 170 518M135 455Q190 390 265 395Q280 450 235 518M460 553L520 557L518 643L465 638"/>
<path d="M1010 500Q1030 450 1045 500Q1050 530 1080 515Q1095 530 1085 560Q1090 580 1105 575Q1120 605 1098 625Q1115 665 1085 670Q1090 705 1055 700Q1045 765 1015 725Q985 770 970 710Q935 725 935 680Q940 655 915 645Q905 610 930 600Q910 550 940 545Q965 545 960 510Q970 475 1010 500Z"/><ellipse cx="1010" cy="612" rx="60" ry="85"/>
<path d="M930 670L880 720L900 730L908 775L965 710M965 720L958 815L975 808L990 828L1005 810L1013 730M697 755L762 797L697 835ZM1188 977L1128 890L1158 855L1170 862L1183 848L1188 875L1205 885L1180 918L1170 895L1150 925"/><ellipse cx="720" cy="793" rx="63" ry="88"/>
<path d="M462 820L575 890L497 1122L200 930L212 891M462 870L550 920L540 950L545 960L495 1055L432 1020L465 910M305 891L300 930L240 891M320 895L310 930L428 1002L450 920L400 891M345 895L430 945M338 910L425 965M470 920Q480 980 445 990M510 940Q515 1020 460 1030"/>
<path d="M0 1055L50 975Q100 950 135 1010Q200 1100 212 1190Q210 1240 175 1237L140 1207Q125 1195 105 1205L0 1270M685 1108L752 1155M738 1092L698 1178M540 1285L577 1348L517 1360ZM787 1408H823L820 1456H787ZM1353 1262L1387 1257L1392 1303L1358 1308ZM155 1500Q240 1370 290 1315Q305 1305 325 1320L535 1455Q550 1470 540 1500"/>
<ellipse cx="88" cy="1016" rx="11" ry="15"/><ellipse cx="117" cy="1031" rx="11" ry="15"/><ellipse cx="78" cy="1055" rx="11" ry="15"/><ellipse cx="107" cy="1069" rx="11" ry="15"/><ellipse cx="74" cy="1140" rx="25" ry="34"/><ellipse cx="1062" cy="1425" rx="39" ry="53"/>
<rect x="918" y="955" width="118" height="157" rx="24" ry="33"/><rect x="845" y="1112" width="115" height="161" rx="24" ry="33"/><rect x="961" y="1112" width="114" height="161" rx="24" ry="33"/><rect x="1075" y="1112" width="113" height="161" rx="24" ry="33"/>
<path d="M1325 655Q1360 520 1450 512Q1530 510 1568 570M1330 640L1290 665Q1270 700 1278 760Q1300 960 1405 1090Q1420 1095 1425 1060L1432 870M1365 570L1400 700Q1440 760 1480 755Q1530 730 1525 680L1485 520M1405 610Q1435 580 1485 588L1505 670L1430 712ZM1412 640L1490 605M1425 670L1498 640M1350 770q25-20 30 10l25 0 0 20 15 10-15 20-20 0 0 20-20-5 0-25-20-5zM1400 850Q1450 865 1510 855L1568 815M1510 828L1535 865L1495 880ZM1430 985Q1500 900 1568 885M1450 935L1568 870M1530 905L1535 1000Q1545 1040 1568 1040M1545 550H1568"/>
<ellipse cx="1328" cy="710" rx="43" ry="58"/><ellipse cx="1328" cy="698" rx="25" ry="28"/><ellipse cx="1552" cy="668" rx="14" ry="18"/>
</g>
<g transform="translate(0 2020) scale(.4592 .3333)">
<path d="M0 260L80 318Q90 328 84 345L40 445L0 550M0 415L40 445M305 279L313 305M990 279L988 310L1005 321M1132 279V321M1332 279V321M1568 60L1480 155L1500 210L1460 275L1525 325L1568 280M1510 220L1568 150M1530 95L1568 180M1510 220L1568 290M150 693Q140 715 150 725L300 815L325 745Q325 735 250 693M215 700L200 750M270 710L248 780M165 693L290 760"/>
<path d="M510 693L430 900Q425 930 445 940L530 985M605 693L520 965M640 693L545 975M735 862L812 868L843 990L780 1063L703 1055L673 940ZM695 940H752L797 892M757 965L778 1048M950 693L903 755L930 850L1035 965L1195 735L1165 693M930 850L1010 740L1035 693"/>
<ellipse cx="522" cy="808" rx="15" ry="20"/><ellipse cx="504" cy="860" rx="15" ry="20"/><ellipse cx="1032" cy="835" rx="52" ry="73"/><ellipse cx="1028" cy="828" rx="14" ry="20"/><ellipse cx="1114" cy="716" rx="27" ry="40"/><ellipse cx="932" cy="1168" rx="22" ry="30"/>
<path d="M1395 700Q1380 790 1385 820Q1395 845 1415 810L1480 700M1515 700Q1510 800 1525 828Q1550 820 1568 760M1415 700Q1440 730 1470 700M1520 700Q1545 720 1568 700M1452 942V990M1452 1075V1122M1388 1032H1432M1472 1032H1517M1407 968L1427 996M1475 1068L1498 1098M1498 968L1475 996M1427 1068L1407 1098"/>
<path d="M1090 1280L1190 960Q1205 940 1245 945M1135 1280L1265 1020M362 1188L455 1137L493 1178L540 1137L628 1190L580 1230L625 1272M362 1188L405 1230L362 1275M405 1230L493 1178L580 1230M405 1230L490 1280L580 1230M0 1000Q60 950 100 960Q200 1000 197 1150Q190 1240 145 1280M88 958Q140 980 145 1080Q140 1230 50 1280M0 1160Q80 1250 180 1245M0 1155Q30 1010 88 960M10 1050Q120 1080 190 1190M67 1140h1M1425 1280L1452 1235L1490 1280M1452 1235L1468 1280"/>
</g>
<g transform="translate(720 2020) scale(.4592 .3333)">
<path d="M190 0L128 100V135L375 322L385 318L545 55Q548 40 535 30L490 0M135 115L235 180M405 255L538 40M375 65L462 125L450 145L368 88ZM230 205Q235 160 265 168L395 262V285M245 190L375 280M232 205L370 312M318 235L308 255M368 268L355 295M0 50Q15 45 22 65L45 110Q48 120 40 130L0 165L30 235L0 280"/>
<ellipse cx="688" cy="282" rx="87" ry="122"/><ellipse cx="688" cy="282" rx="60" ry="85"/><ellipse cx="687" cy="280" rx="4" ry="5"/>
<path d="M662 88L682 235M693 325L712 475M548 317L655 290M720 272L827 244M920 165L1015 160Q1035 165 1045 185L1155 445Q1160 470 1145 468L1050 470Q1030 470 1010 440L912 200Q905 170 920 165M1062 380Q980 320 976 275Q985 240 1015 275Q1030 240 1065 258Q1095 290 1062 380M1248 15Q1260-5 1290 5L1420 70Q1445 90 1442 120L1410 260Q1395 290 1370 288L1308 255L1245 300L1240 290L1250 230Q1210 210 1210 160ZM1270 5Q1250 40 1235 150Q1240 195 1280 215L1262 275M1322 218Q1290 150 1290 110Q1305 65 1340 105Q1365 75 1392 125Q1395 170 1322 218"/>
<path d="M145 394L180 389L183 437L150 441ZM817 478L851 473L855 518L822 524ZM262 505H520Q540 510 540 545V735L555 870Q550 910 530 912H250Q225 910 225 865L243 740V545Q243 510 262 505M306 555H474V693H306ZM322 740H458L466 843H314ZM288 716H490M250 876H525M275 700Q268 720 275 740M505 700Q512 720 505 740M264 805h14v15h15v15h-15v15h-14v-15h-15v-15h15zM490 855h1"/>
<ellipse cx="278" cy="773" rx="19" ry="20"/><ellipse cx="503" cy="755" rx="6" ry="7"/><ellipse cx="485" cy="775" rx="6" ry="7"/><ellipse cx="520" cy="775" rx="6" ry="7"/><ellipse cx="504" cy="794" rx="6" ry="7"/><ellipse cx="389" cy="531" rx="5" ry="7"/>
<ellipse cx="752" cy="705" rx="48" ry="65"/><path d="M738 770V870M766 770V870M718 912L725 870H778L786 912M660 930Q662 912 675 912H835Q848 915 848 930V965L830 1012H677L660 968ZM660 970H848M675 912V895H706V912M1008 625Q1020 640 1028 680L1075 688Q1085 700 1050 740L1053 812L1008 788L962 812L966 745L936 700Q935 688 985 685Q995 630 1008 625M1197 685L1247 655M1208 635L1238 698M1568 265L1520 385L1568 420M1520 385L1422 620M1388 437L1337 540V555L1500 688Q1515 690 1520 680L1568 560M1388 437L1568 575"/>
<path d="M1418 738L1515 890L1312 1142L1212 990ZM1355 840L1385 805L1465 935L1342 1078L1262 950L1285 920M1380 840Q1395 850 1440 915Q1440 940 1345 1040Q1330 1040 1290 960Q1290 940 1380 840M1405 800L1420 780M1413 815L1430 795M1422 830L1440 810"/>
<ellipse cx="1466" cy="870" rx="9" ry="13"/><ellipse cx="1484" cy="900" rx="9" ry="13"/><ellipse cx="1298" cy="1072" rx="9" ry="13"/><ellipse cx="1317" cy="1101" rx="9" ry="13"/>
<path d="M1120 853L1190 915Q1160 980 1115 935Q1100 900 1120 853M1127 875L1168 915Q1150 950 1125 920ZM1120 940L1015 1165M1135 950L1030 1175M1005 1160L1030 1175L975 1280M1005 1160L945 1280M900 1280L940 1185Q950 1175 965 1190L1035 1255V1280M153 1010L222 1062V1105L153 1160L85 1108V1062ZM85 1062L153 1118L222 1062M153 1118V1160M117 1050Q115 1090 152 1090Q190 1090 188 1050"/><ellipse cx="152" cy="1045" rx="35" ry="28"/>
<path d="M375 1280Q365 1100 490 1092Q620 1100 607 1280M437 1118Q500 1240 597 1190M525 1105L482 1280M385 1210L535 1280M783 1202L820 1266L762 1276ZM1255 1280L1270 1255L1268 1215L1305 1235L1343 1230L1338 1280M1568 1000Q1500 1100 1508 1180Q1520 1250 1560 1280M1525 1040H1568M1525 1060L1568 1160M0 570Q45 620 30 680L0 760"/><ellipse cx="0" cy="635" rx="14" ry="20"/>
</g>
<text class="outl" font-size="62"><tspan x="581" y="1525">GAME</tspan><tspan x="581" y="1584">OVER</tspan></text>
<text class="outl" x="1169" y="1900" font-size="34">W</text><text class="outl" x="1135" y="1951" font-size="34">A</text><text class="outl" x="1187" y="1951" font-size="34">S</text><text class="outl" x="1238" y="1951" font-size="34">D</text>
<text class="outl" x="900" y="2239" font-size="30">3D</text><text class="outl" x="1184" y="1762" font-size="42" transform="rotate(12 1184 1750)">1</text>
<text class="outl" x="1326" y="558" font-size="68" transform="rotate(12 1326 540)">A</text><text class="outl" x="622" y="538" font-size="44" transform="rotate(36 622 528)">GP</text>
</svg>

  <div class="msg tail stub"></div>
  <div class="msg sent align-self-end"><span>Додати слова <svg class="emo"><use href="#note"/></svg></span><span class="stamp">22:18 <svg width="58" height="38"><use href="#ticks"/></svg></span></div>
  <div class="msg first multi"><span>Додай власні слова у персональний<br>словник <svg class="emo"><use href="#hands"/></svg></span><span class="stamp">22:18</span></div>
  <div class="msg tail multi"><span>Відправ мені список англійських слів через<br>кому</span><span class="stamp">22:18</span></div>
  <div class="msg sent mid align-self-end"><span>drummer, science, winter, mood</span><span class="stamp">22:20 <svg width="58" height="38"><use href="#ticks"/></svg></span></div>
  <div class="msg first"><span>Перевір авто-переклад слів <svg class="emo"><use href="#shake"/></svg></span><span class="stamp">22:20</span></div>
  <div class="msg tail loose"><span><svg class="emo"><use href="#book"/></svg> Напиши переклад для слова <b>Drummer</b></span><span class="stamp">22:20</span></div>
  <div class="msg sent low align-self-end"><span>барабанщик</span><span class="stamp">22:20 <svg width="58" height="38"><use href="#ticks"/></svg></span></div>
  <div class="msg first"><span>Ok <svg class="emo"><use href="#thumb"/></svg></span><span class="stamp">22:20</span></div>
  <div class="msg"><span><svg class="emo"><use href="#orange"/></svg> <b>Drummer</b> – барабанщик</span><span class="stamp">22:20</span></div>
  <div class="msg"><span><svg class="emo"><use href="#book"/></svg> <b>Science</b> – Наука</span><span class="stamp">22:20</span></div>
  <div class="msg"><span><svg class="emo"><use href="#book"/></svg> <b>Winter</b> – Зима</span><span class="stamp">22:20</span></div>
  <div class="msg tail"><span><svg class="emo"><use href="#book"/></svg> <b>Mood</b> – Настрій</span><span class="stamp">22:20</span></div>
  <div class="quick d-flex position-relative">
    <button type="button"><svg class="emo"><use href="#yes"/></svg> Yes</button>
    <button type="button"><svg class="emo"><use href="#no"/></svg> No</button>
  </div>
</main>

<form class="compose d-flex align-items-center">
  <button type="button" class="iconbtn" aria-label="Emoji"><svg width="82" height="82" viewBox="0 0 82 82" fill="none" stroke="currentColor" stroke-width="6"><circle cx="41" cy="41" r="37"/><path d="M26 49Q41 62 56 49" stroke-linecap="round" stroke-width="7"/><ellipse cx="29" cy="35" rx="5" ry="6" fill="currentColor" stroke="none"/><ellipse cx="53" cy="35" rx="5" ry="6" fill="currentColor" stroke="none"/></svg></button>
  <input class="flex-grow-1" type="text" placeholder="Message" aria-label="Message">
  <button type="button" class="iconbtn" aria-label="Bot keyboard"><svg width="82" height="64" viewBox="0 0 82 64" fill="none" stroke="currentColor" stroke-width="6"><rect x="3" y="3" width="76" height="58" rx="13"/><path d="M16 21.500H67M16 32.500H67" stroke-width="7" stroke-dasharray="8 2.700"/><path d="M30 46.500H53" stroke-linecap="round"/></svg></button>
  <button type="button" class="iconbtn attach" aria-label="Attach"><svg width="70" height="82" viewBox="0 0 70 82" fill="none" stroke="currentColor" stroke-width="6" stroke-linecap="round"><path d="M5 34L26 12Q43-4 58 8Q73 22 62 37L29 73Q17 84 8 76Q-1 66 8 54L39 23Q46 16 51 21Q56 27 50 34L24 60"/></svg></button>
  <button type="button" class="iconbtn voice" aria-label="Voice"><svg width="64" height="86" viewBox="0 0 64 86" fill="none" stroke="currentColor" stroke-width="6" stroke-linecap="round"><rect x="17" y="4" width="30" height="54" rx="15"/><path d="M4 42Q5 72 32 72Q59 72 60 42M32 72V82"/></svg></button>
</form>
<div class="kbd"><button type="button" class="w-100">Скасувати <svg class="emo"><use href="#flag"/></svg></button></div>
<nav class="softnav d-flex align-items-center">
  <button class="iconbtn" aria-label="Recents"><svg class="mx-auto" width="56" height="60" viewBox="0 0 56 60" stroke="currentColor" stroke-width="7" stroke-linecap="round"><path d="M5 5V55M28 5V55M51 5V55"/></svg></button>
  <button class="iconbtn" aria-label="Home"><svg class="mx-auto" width="64" height="64" viewBox="0 0 64 64" fill="none" stroke="currentColor" stroke-width="7"><rect x="5" y="5" width="54" height="54" rx="17"/></svg></button>
  <button class="iconbtn" aria-label="Back"><svg class="mx-auto" width="36" height="60" viewBox="0 0 36 60" fill="none" stroke="currentColor" stroke-width="7" stroke-linecap="round" stroke-linejoin="round"><path d="M31 5L5 30L31 55"/></svg></button>
</nav>
</div>
<script src="https://cdn.jsdelivr.net/npm/bootstrap@5.3.0/dist/js/bootstrap.bundle.min.js"></script>
</body>
</html>
